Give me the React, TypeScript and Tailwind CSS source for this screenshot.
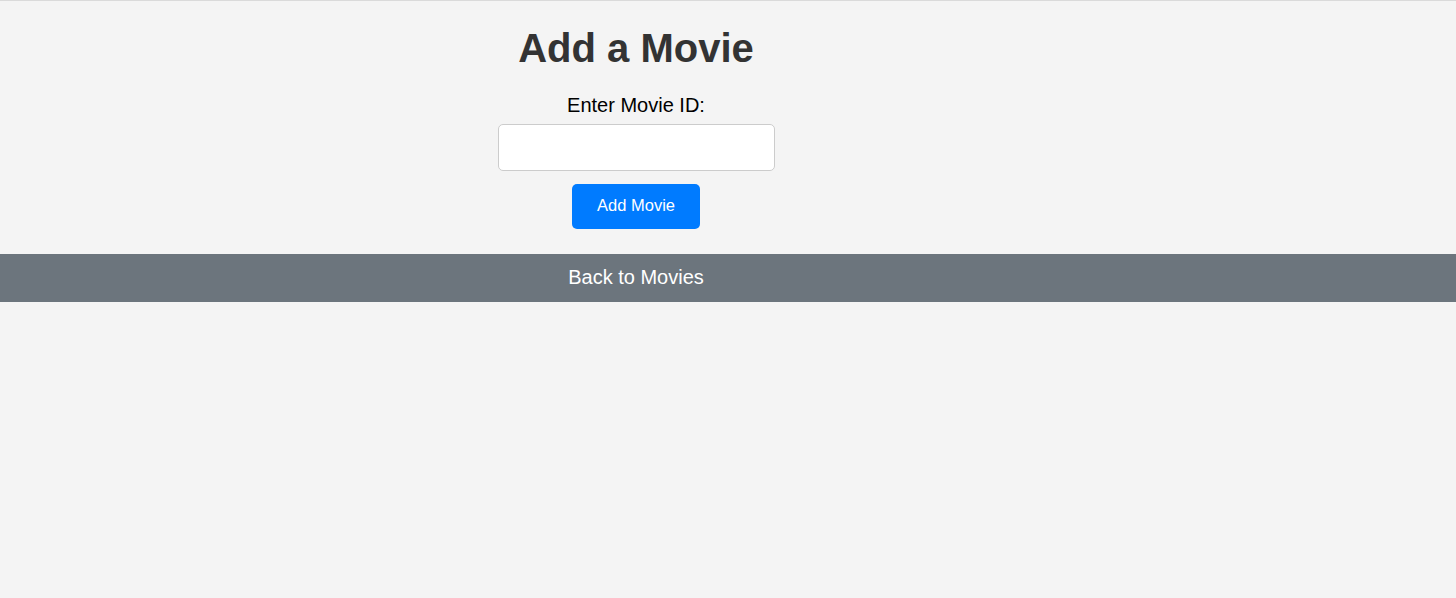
import { useState } from "react";

export default function App() {
  const [movieId, setMovieId] = useState("");

  const handleSubmit = (e: React.FormEvent) => {
    e.preventDefault();
    setMovieId("");
  };

  return (
    <div className="min-h-screen bg-[#f4f4f4] border-t border-[#dadada] font-['Liberation_Sans',Arial,sans-serif]">
      <div className="w-[1272px] flex flex-col items-center">
        <h1 className="mt-6 text-[40px] leading-[46px] font-bold text-[#333]">Add a Movie</h1>
        <form onSubmit={handleSubmit} className="flex flex-col items-center">
          <label className="mt-[23px] text-[20px] leading-[23px] text-black">Enter Movie ID:</label>
          <input
            type="text"
            value={movieId}
            onChange={(e) => setMovieId(e.target.value)}
            className="mt-[7px] w-[277px] h-[47px] bg-white border border-[#cccccc] rounded-[5px] px-3 text-base outline-none"
          />
          <button
            type="submit"
            className="mt-[13px] w-[128px] h-[45px] pb-[2px] bg-[#007bff] text-white text-[16.5px] rounded-[5px] cursor-pointer"
          >
            Add Movie
          </button>
        </form>
      </div>
      <div className="mt-[25px] h-[48px] pb-[2px] bg-[#6c757d] flex items-center">
        <a href="#" className="w-[1272px] text-center text-white text-[20px]">
          Back to Movies
        </a>
      </div>
    </div>
  );
}
